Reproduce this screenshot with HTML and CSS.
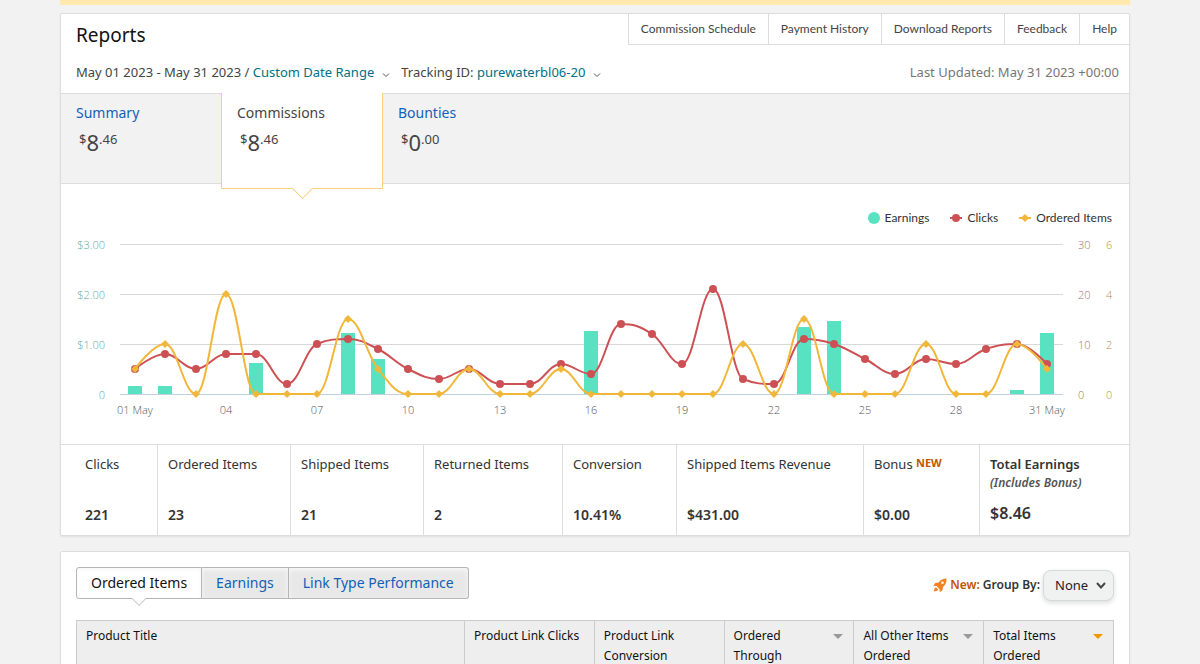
FILE: index.html
```html
<!DOCTYPE html>
<html lang="en">

<head>
    <meta charset="UTF-8">
    <meta name="viewport" content="width=device-width, initial-scale=1">
    <title>Reports</title>
    <link rel="stylesheet" href="styles.css">
</head>

<body>
    <div class="notice"></div>

    <main class="page">
        <!-- Report header, chart and totals -->
        <section class="panel">
            <header class="report-header">
                <div class="title-row">
                    <h1>Reports</h1>
                    <nav class="top-links">
                        <a href="#">Commission Schedule</a>
                        <a href="#">Payment History</a>
                        <a href="#">Download Reports</a>
                        <a href="#">Feedback</a>
                        <a href="#">Help</a>
                    </nav>
                </div>
                <div class="filter-row">
                    <div class="filters">
                        <span>May 01 2023 - May 31 2023 / <button type="button" class="link-button">Custom Date Range<svg class="chevron" viewBox="0 0 8 6"><path d="M1 1.5 L4 4.5 L7 1.5"/></svg></button></span>
                        <span>Tracking ID: <button type="button" class="link-button">purewaterbl06-20<svg class="chevron" viewBox="0 0 8 6"><path d="M1 1.5 L4 4.5 L7 1.5"/></svg></button></span>
                    </div>
                    <span class="updated">Last Updated: May 31 2023 +00:00</span>
                </div>
            </header>

            <div class="cards">
                <a class="card" href="#">
                    <span class="card-name">Summary</span>
                    <span class="amount"><sup>$</sup>8<sup>.46</sup></span>
                </a>
                <a class="card active" href="#">
                    <span class="card-name">Commissions</span>
                    <span class="amount"><sup>$</sup>8<sup>.46</sup></span>
                </a>
                <a class="card" href="#">
                    <span class="card-name">Bounties</span>
                    <span class="amount"><sup>$</sup>0<sup>.00</sup></span>
                </a>
            </div>

            <div class="chart-area">
                <div class="legend">
                    <span><svg width="12" height="12"><circle cx="6" cy="6" r="6" fill="#58e2c2"/></svg>Earnings</span>
                    <span><svg width="12" height="12"><path d="M0 6H12" stroke="#cd5154" stroke-width="2"/><circle cx="6" cy="6" r="4" fill="#cd5154"/></svg>Clicks</span>
                    <span><svg width="12" height="12"><path d="M0 6H12" stroke="#f0b73a" stroke-width="2"/><path d="M6 2L10 6L6 10L2 6Z" fill="#f0b73a"/></svg>Ordered Items</span>
                </div>
                <svg id="chart" class="chart" role="img" aria-label="Earnings, clicks and ordered items by day"></svg>
            </div>

            <dl class="totals">
                <div><dt>Clicks</dt><dd>221</dd></div>
                <div><dt>Ordered Items</dt><dd>23</dd></div>
                <div><dt>Shipped Items</dt><dd>21</dd></div>
                <div><dt>Returned Items</dt><dd>2</dd></div>
                <div><dt>Conversion</dt><dd>10.41%</dd></div>
                <div><dt>Shipped Items Revenue</dt><dd>$431.00</dd></div>
                <div><dt>Bonus <b class="new">NEW</b></dt><dd>$0.00</dd></div>
                <div class="grand-total"><dt>Total Earnings<em>(Includes Bonus)</em></dt><dd>$8.46</dd></div>
            </dl>
        </section>

        <!-- Item table -->
        <section class="panel details">
            <div class="toolbar">
                <div class="tabs">
                    <button type="button" class="selected">Ordered Items</button>
                    <button type="button">Earnings</button>
                    <button type="button">Link Type Performance</button>
                </div>
                <div class="group-by">
                    <svg class="rocket" viewBox="0 0 14 15">
                        <path fill="#f58220" d="M13.5 0.5C10 0.6 7.400 2 5.500 4.500L2.300 5L0.200 8L3.600 8.100L6.600 11.200L6.700 14.300L9.500 12.200L10 9C12.500 7 13.700 4.300 13.500 0.500ZM3 9.200C1.500 9.600 1 11.200 0.800 13.500C3 13.400 4.700 12.900 5.200 11.500Z"/>
                        <circle cx="9.500" cy="4.700" r="1.300" fill="#fff"/>
                    </svg>
                    <label for="groupBy"><span class="new">New:</span> Group By:</label>
                    <span class="select-wrap">
                        <select id="groupBy">
                            <option>None</option>
                        </select>
                        <svg class="select-arrow" viewBox="0 0 10 7"><path d="M1 1L5 5.500L9 1"/></svg>
                    </span>
                </div>
            </div>

            <table>
                <thead>
                    <tr>
                        <th class="product">Product Title</th>
                        <th>Product Link Clicks</th>
                        <th>Product Link Conversion</th>
                        <th class="sortable">Ordered Through</th>
                        <th class="sortable">All Other Items Ordered</th>
                        <th class="sortable sorted">Total Items Ordered</th>
                    </tr>
                </thead>
            </table>
        </section>
    </main>

    <script src="chart.js"></script>
</body>

</html>
```
FILE: styles.css
```css
/* Basic styling */
* {
    box-sizing: border-box;
}

body {
    margin: 0;
    padding: 0 70px 0 60px;
    overflow: hidden;
    background: #f2f2f2;
    color: #444;
    font-family: "Noto Sans", "Open Sans", sans-serif;
    font-size: 13px;
    line-height: 20px;
}

a {
    color: inherit;
    text-decoration: none;
}

button {
    font: inherit;
    cursor: pointer;
}

.notice {
    height: 5px;
    background: #ffe9ae;
}

.page {
    display: flex;
    flex-direction: column;
    gap: 15px;
    padding-top: 8px;
}

.panel {
    background: #fff;
    border: 1px solid #ddd;
    border-radius: 2px;
    box-shadow: 0 1px 2px rgba(0, 0, 0, 0.08);
}

/* Header */
.report-header {
    height: 80px;
    border-bottom: 1px solid #ddd;
}

.title-row,
.filter-row {
    display: flex;
    justify-content: space-between;
}

h1 {
    margin: 0;
    padding: 7px 15px;
    color: #111;
    font-size: 19px;
    font-weight: 400;
    line-height: 28px;
}

.top-links {
    display: flex;
    height: 31px;
    border-bottom: 1px solid #ddd;
    font-family: Lato, "Noto Sans", sans-serif;
    font-size: 12px;
    line-height: 30px;
}

.top-links a {
    padding: 0 12px;
    border-left: 1px solid #ddd;
}

.filter-row {
    padding: 6px 10px 0 15px;
}

.filters {
    display: flex;
    gap: 11px;
}

.link-button {
    padding: 0;
    border: 0;
    background: none;
    color: #007185;
}

.chevron {
    width: 8px;
    height: 6px;
    margin-left: 8px;
    vertical-align: -1px;
    fill: none;
    stroke: #555;
}

.updated {
    color: #767676;
}

/* Report cards */
.cards {
    display: flex;
    height: 90px;
    background: #f2f2f2;
    border-bottom: 1px solid #ddd;
}

.card {
    width: 160px;
    padding: 9px 15px;
}

.card-name {
    display: block;
    color: #1260b8;
    font-size: 14px;
}

.amount {
    display: block;
    padding: 4px 3px;
    font-size: 22px;
    line-height: 30px;
}

.amount sup {
    font-size: 13px;
    line-height: 10px;
    vertical-align: 7px;
}

.card.active {
    position: relative;
    width: 162px;
    height: 96px;
    margin-top: -1px;
    padding-top: 10px;
    background: #fff;
    border: 1px solid #f8cf82;
    border-top: 0;
}

.active .card-name {
    color: #444;
}

.card.active::after,
.tabs .selected::after {
    content: "";
    position: absolute;
    left: 50%;
    bottom: -8px;
    width: 14px;
    height: 14px;
    margin-left: -7px;
    background: #fff;
    border: solid #f8cf82;
    border-width: 0 1px 1px 0;
    transform: rotate(45deg);
}

/* Chart */
.legend {
    display: flex;
    justify-content: flex-end;
    gap: 21px;
    padding: 24px 17px 0 0;
    color: #333;
    font-family: Lato, "Noto Sans", sans-serif;
    font-size: 12px;
}

.legend span {
    display: flex;
    align-items: center;
    gap: 5px;
}

.chart {
    display: block;
    width: 100%;
    height: 216px;
}

.chart text {
    font-family: "Open Sans", "Noto Sans", sans-serif;
    font-size: 11px;
    font-weight: 300;
}

/* Totals */
.totals {
    display: grid;
    grid-template-columns: 96fr 133fr 133fr 139fr 114fr 187fr 116fr 150fr;
    height: 91px;
    margin: 0;
    border-top: 1px solid #ddd;
    color: #333;
}

.totals div {
    display: flex;
    flex-direction: column;
    justify-content: space-between;
    padding: 9px 10px 10px;
    border-left: 1px solid #ddd;
}

.totals div:first-child {
    padding-left: 24px;
    border-left: 0;
}

.totals dd {
    margin: 0;
    font-size: 14px;
    font-weight: 600;
}

.new {
    color: #c45500;
}

.totals .new {
    font-size: 11px;
    line-height: 10px;
    vertical-align: 2px;
}

.grand-total dt {
    font-weight: 600;
}

.grand-total em {
    display: block;
    color: #555;
    font-size: 12px;
    line-height: 18px;
}

.totals .grand-total dd {
    font-size: 16px;
    line-height: 24px;
}

/* Item table */
.details {
    padding: 15px;
}

.toolbar {
    display: flex;
    justify-content: space-between;
    height: 53px;
}

.tabs {
    display: flex;
    height: 32px;
}

.tabs button {
    position: relative;
    padding: 0 14px;
    border: 1px solid #b5b5b5;
    border-left-width: 0;
    background: #e8e8e8;
    box-shadow: inset 0 2px 4px #f8f8f8;
    color: #1260b8;
    font-size: 14px;
}

.tabs button:first-child {
    border-left-width: 1px;
    border-radius: 3px 0 0 3px;
}

.tabs button:last-child {
    border-radius: 0 3px 3px 0;
}

.tabs .selected {
    background: #fff;
    color: #111;
}

.tabs .selected::after {
    bottom: -6px;
    width: 9px;
    height: 9px;
    margin-left: -5px;
    border-color: #ccc;
}

.group-by {
    display: flex;
    align-items: center;
    height: 36px;
    gap: 3px;
    color: #333;
    font-size: 12px;
    font-weight: 600;
}

.rocket {
    width: 14px;
    height: 15px;
}

.select-wrap {
    position: relative;
}

select {
    width: 71px;
    height: 31px;
    padding: 0 11px;
    appearance: none;
    background: #f0f2f2;
    border: 1px solid #d5d9d9;
    border-radius: 8px;
    box-shadow: 0 2px 5px rgba(15, 17, 17, 0.15);
    color: #222;
    font-family: inherit;
    font-size: 13px;
}

.select-arrow {
    position: absolute;
    top: 12px;
    right: 8px;
    width: 10px;
    height: 7px;
    fill: none;
    stroke: #444;
    stroke-width: 2;
    pointer-events: none;
}

table {
    width: 100%;
    border-collapse: collapse;
    table-layout: fixed;
}

th {
    padding: 5px 9px;
    background: #eee;
    border: 1px solid #ccc;
    color: #111;
    font-size: 12px;
    font-weight: 400;
    text-align: left;
    vertical-align: top;
}

.product {
    width: 388px;
}

.sortable {
    position: relative;
    padding-right: 27px;
}

.sortable::after {
    content: "";
    position: absolute;
    top: 13px;
    right: 10px;
    border: solid transparent;
    border-width: 5px 5px 0;
    border-top-color: #999;
}

.sorted::after {
    border-top-color: #f09800;
}
```
FILE: chart.js
```js
const earnings = [0.16, 0.16, 0, 0, 0.62, 0, 0, 1.22, 0.7, 0, 0, 0, 0, 0, 0, 1.26, 0, 0, 0, 0, 0, 0, 1.34, 1.46, 0, 0, 0, 0, 0, 0.08, 1.22];
const clicks = [5, 8, 5, 8, 8, 2, 10, 11, 9, 5, 3, 5, 2, 2, 6, 4, 14, 12, 6, 21, 3, 2, 11, 10, 7, 4, 7, 6, 9, 10, 6];
const ordered = [1, 2, 0, 4, 0, 0, 0, 3, 1, 0, 0, 1, 0, 0, 1, 0, 0, 0, 0, 0, 2, 0, 3, 0, 0, 0, 2, 0, 0, 2, 1];

const chart = document.getElementById('chart');
const left = 59;
const rightSpace = 66;
const zero = 166;
const step = 50; // Pixels between two grid lines

// Smooth path that never overshoots its points
function splinePath(points) {
    const s = 1.5;
    const d = s + 1;
    let path = `M${points[0].x} ${points[0].y}`;
    let control = points[0];
    for (let i = 1; i < points.length; i++) {
        const last = points[i - 1];
        const p = points[i];
        const next = points[i + 1];
        let inX = p.x, inY = p.y, outX = p.x, outY = p.y;
        if (next) {
            inX = (s * p.x + last.x) / d;
            inY = (s * p.y + last.y) / d;
            outX = (s * p.x + next.x) / d;
            outY = (s * p.y + next.y) / d;
            const shift = (outY - inY) * (outX - p.x) / (outX - inX) + p.y - outY;
            inY += shift;
            outY += shift;
            const inClamped = Math.min(Math.max(inY, Math.min(last.y, p.y)), Math.max(last.y, p.y));
            if (inClamped !== inY) {
                inY = inClamped;
                outY = 2 * p.y - inY;
            }
            const outClamped = Math.min(Math.max(outY, Math.min(next.y, p.y)), Math.max(next.y, p.y));
            if (outClamped !== outY) {
                outY = outClamped;
                inY = 2 * p.y - outY;
            }
        }
        path += `C${control.x} ${control.y} ${inX} ${inY} ${p.x} ${p.y}`;
        control = { x: outX, y: outY };
    }
    return path;
}

function drawChart() {
    const right = chart.clientWidth - rightSpace;
    const slot = (right - left) / clicks.length;
    const xOf = i => Math.floor(left + slot * (i + 0.5));
    let out = '';

    // Grid lines and axis labels
    for (let i = 0; i <= 3; i++) {
        const y = zero - i * step;
        out += `<path d="M${left} ${y + 0.5}H${right}" stroke="${i ? '#d8d8d8' : '#c0d0e0'}"/>`;
        out += `<text x="${left - 15}" y="${y + 5}" text-anchor="end" fill="#5fae9c">${i ? '$' + i + '.00' : '0'}</text>`;
        out += `<text x="${right + 15}" y="${y + 5}" fill="#a5706d">${i * 10}</text>`;
        out += `<text x="${right + 43}" y="${y + 5}" fill="#c08f50">${i * 2}</text>`;
    }
    for (let i = 0; i < clicks.length; i += 3) {
        const day = String(i + 1).padStart(2, '0');
        const month = i === 0 || i === 30 ? ' May' : '';
        out += `<text x="${xOf(i)}" y="${zero + 20}" text-anchor="middle" fill="#555">${day}${month}</text>`;
    }

    // Earnings
    earnings.forEach((value, i) => {
        if (value) {
            out += `<rect x="${xOf(i) - 7}" y="${zero - value * step}" width="14" height="${value * step}" fill="#58e2c2"/>`;
        }
    });

    // Clicks
    const clickPoints = clicks.map((value, i) => ({ x: xOf(i), y: zero - value * step / 10 }));
    out += `<path d="${splinePath(clickPoints)}" fill="none" stroke="#cd5154" stroke-width="2"/>`;
    clickPoints.forEach(p => {
        out += `<circle cx="${p.x}" cy="${p.y}" r="4" fill="#cd5154"/>`;
    });

    // Ordered items
    const itemPoints = ordered.map((value, i) => ({ x: xOf(i), y: zero - value * step / 2 }));
    out += `<path d="${splinePath(itemPoints)}" fill="none" stroke="#f0b73a" stroke-width="2"/>`;
    itemPoints.forEach(p => {
        out += `<path d="M${p.x} ${p.y - 4}l4 4l-4 4l-4 -4Z" fill="#f0b73a"/>`;
    });

    chart.innerHTML = out;
}

drawChart();
window.addEventListener('resize', drawChart);
```
